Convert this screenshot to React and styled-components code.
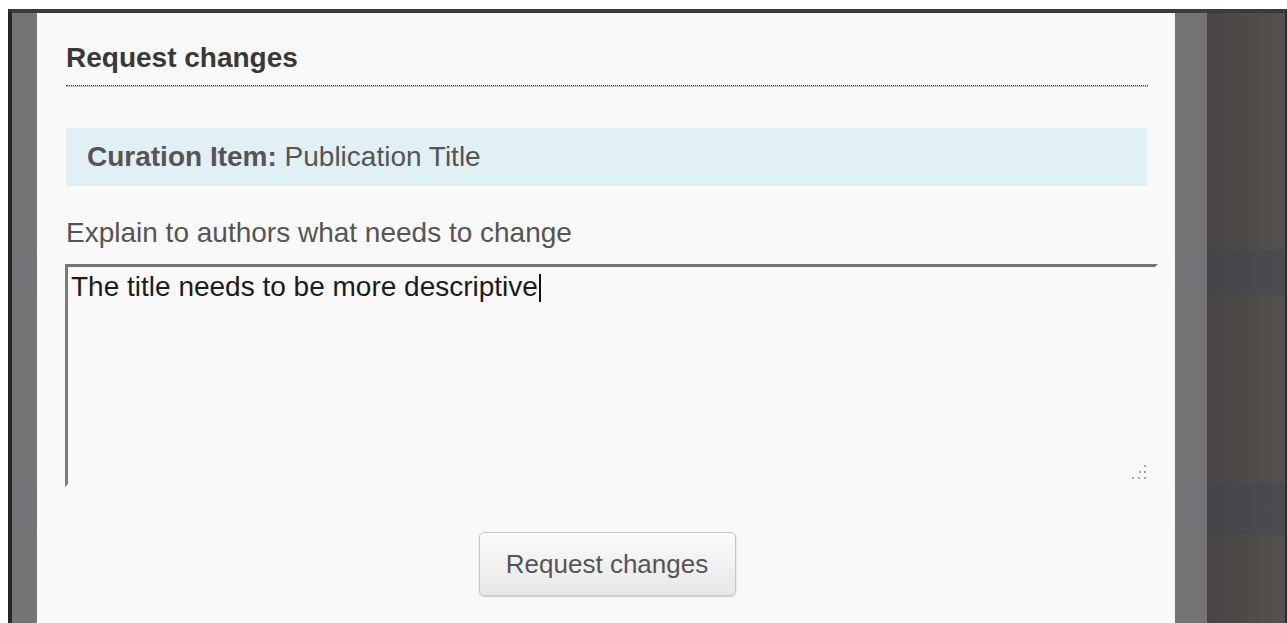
import React from "react";
import styled, { createGlobalStyle } from "styled-components";

const GlobalStyle = createGlobalStyle`
  html, body {
    margin: 0;
    padding: 0;
    background: #ffffff;
    overflow: hidden;
  }
  body {
    font-family: "Liberation Sans", Arial, sans-serif;
  }
`;

const Frame = styled.div`
  padding: 9px 0 0 8px;
  height: 100vh;
  box-sizing: border-box;
`;

/* Dimmed page behind the dialog, with the faint rows of the page showing through */
const Backdrop = styled.div`
  height: 100%;
  box-sizing: border-box;
  border-top: 4px solid #3b3b3b;
  border-left: 4px solid #262626;
  border-right: 2px solid #2e2e2e;
  display: flex;
  align-items: flex-start;
  background-image:
    linear-gradient(
      to bottom,
      transparent 237px,
      rgba(56, 67, 80, 0.35) 237px,
      rgba(56, 67, 80, 0.35) 282px,
      transparent 282px,
      transparent 470px,
      rgba(56, 67, 80, 0.35) 470px,
      rgba(56, 67, 80, 0.35) 522px,
      transparent 522px
    ),
    linear-gradient(to right, #4a4746 0, #484544 calc(100% - 80px), #55514f 100%);
`;

const Dialog = styled.section`
  height: 100%;
  box-sizing: border-box;
  width: calc(1138px + 57px);
  background: #f9f9f9;
  background-clip: padding-box;
  border-left: 25px solid rgba(255, 255, 255, 0.25);
  border-right: 32px solid rgba(255, 255, 255, 0.25);
  padding: 29px 27px 0 29px;
  display: flex;
  flex-direction: column;
`;

const Title = styled.h2`
  margin: 0;
  font-size: 28px;
  line-height: 32px;
  font-weight: 700;
  color: #383838;
  padding-bottom: 11px;
  border-bottom: 1px dotted #3a3a3a;
  box-shadow: 0 1px 0 #c4c4c4;
`;

const InfoBox = styled.div`
  margin-top: 42px;
  margin-right: 1px;
  background: #e1f0f4;
  padding: 13px 21px;
  font-size: 28px;
  line-height: 32px;
  color: #555;
`;

const Label = styled.label`
  display: block;
  margin-top: 31px;
  font-size: 28px;
  line-height: 32px;
  color: #555;
`;

const Field = styled.div`
  position: relative;
  margin-top: 15px;
  margin-left: -1px;
  width: 1093px;
  height: 223px;
  box-sizing: border-box;
  border: 3px solid;
  border-color: #747474 #f9f9f9 #f9f9f9 #7a7a7a;
  background: #f9f9f9;
  padding: 4px 3px;
  font-size: 28px;
  line-height: 32px;
  color: #1c1c1c;
`;

const Caret = styled.span`
  display: inline-block;
  width: 2px;
  height: 28px;
  margin-left: 1px;
  vertical-align: -6px;
  background: #111;
`;

const Grip = styled.svg`
  position: absolute;
  right: 8px;
  bottom: 4px;
  width: 16px;
  height: 16px;
`;

const Actions = styled.div`
  display: flex;
  justify-content: center;
  margin-top: 45px;
`;

const Button = styled.button`
  width: 257px;
  height: 64px;
  font-family: "Liberation Sans", Arial, sans-serif;
  font-size: 26px;
  color: #555;
  background: linear-gradient(to bottom, #fbfbfb, #e7e7e7);
  border: 1px solid #c6c6c6;
  border-radius: 5px;
  box-shadow: 0 1px 2px rgba(0, 0, 0, 0.18);
  cursor: pointer;
`;

const GripDots = () => (
  <Grip viewBox="0 0 16 16" aria-hidden="true">
    {[
      [14, 2],
      [9, 8],
      [14, 8],
      [2, 14],
      [8, 14],
      [14, 14],
    ].map(([cx, cy]) => (
      <rect key={`${cx}-${cy}`} x={cx - 1} y={cy - 1} width="2" height="2" fill="#a8a8a8" />
    ))}
  </Grip>
);

export default function App() {
  return (
    <>
      <GlobalStyle />
      <Frame>
        <Backdrop>
          <Dialog>
            <Title>Request changes</Title>
            <InfoBox>
              <b>Curation Item:</b> Publication Title
            </InfoBox>
            <Label>Explain to authors what needs to change</Label>
            <Field role="textbox">
              The title needs to be more descriptive
              <Caret />
              <GripDots />
            </Field>
            <Actions>
              <Button type="button">Request changes</Button>
            </Actions>
          </Dialog>
        </Backdrop>
      </Frame>
    </>
  );
}
